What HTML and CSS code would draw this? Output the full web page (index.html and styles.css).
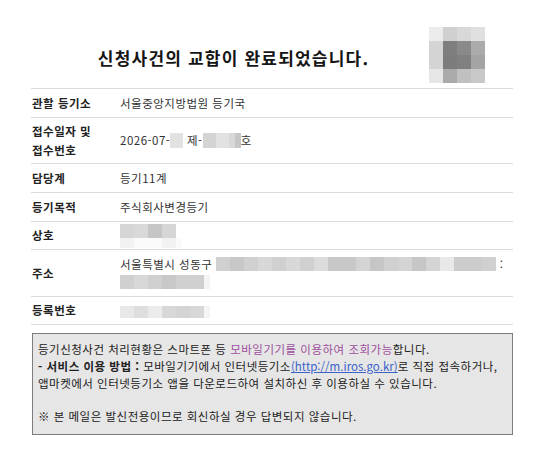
FILE: index.html
```html
<!DOCTYPE html>
<html lang="ko">
<head>
<meta charset="utf-8">
<title>교합 완료 안내</title>
<link rel="stylesheet" href="styles.css">
</head>
<body>
<div class="mail">
  <header class="head">
    <h1 class="title">신청사건의 교합이 완료되었습니다.</h1>
    <div class="qr" aria-hidden="true">
      <span></span><span></span><span></span><span></span>
      <span></span><span></span><span></span><span></span>
      <span></span><span></span><span></span><span></span>
      <span></span><span></span><span></span><span></span>
    </div>
  </header>

  <div class="info">
    <div class="row">
      <div class="label">관할 등기소</div>
      <div class="value">서울중앙지방법원 등기국</div>
    </div>
    <div class="row row-receipt">
      <div class="label label-2">접수일자 및<br>접수번호</div>
      <div class="value">2026-07-<span class="mask mask-day"><i class="c-e2"></i></span> 제-<span class="mask mask-no"><i class="c-d4"></i><i class="c-e2"></i><i class="c-d8 w6"></i><i class="c-c6 w6"></i></span>호</div>
    </div>
    <div class="row">
      <div class="label">담당계</div>
      <div class="value">등기11계</div>
    </div>
    <div class="row">
      <div class="label">등기목적</div>
      <div class="value">주식회사변경등기</div>
    </div>
    <div class="row row-s">
      <div class="label">상호</div>
      <div class="value">
        <span class="mask-line mask-tall"><i class="c-d6"></i><i class="c-d9"></i><i class="c-c6"></i><i class="c-d6"></i></span>
        <span class="mask-line mask-low"><i class="c-f2"></i><i class="c-fa"></i><i class="c-fa"></i><i class="c-f2"></i><i class="c-fa w6"></i></span>
      </div>
    </div>
    <div class="row row-addr">
      <div class="label">주소</div>
      <div class="value">
        <span class="addr-line">서울특별시 성동구 <span class="mask mask-addr"><i class="c-d0"></i><i class="c-c8"></i><i class="c-d0"></i><i class="c-d8"></i><i class="c-d0"></i><i class="c-d8"></i><i class="c-d0"></i><i class="c-dc"></i><i class="c-c8"></i><i class="c-c8"></i><i class="c-d4"></i><i class="c-c6"></i><i class="c-d0"></i><i class="c-d4"></i><i class="c-c6"></i><i class="c-d4"></i><i class="c-e8"></i><i class="c-cc"></i><i class="c-cc"></i><i class="c-d0"></i></span> :</span>
        <span class="addr-line"><span class="mask mask-addr2"><i class="c-d0"></i><i class="c-d8"></i><i class="c-d0"></i><i class="c-c8"></i><i class="c-d0"></i><i class="c-d0"></i><i class="c-f4 w6"></i></span></span>
      </div>
    </div>
    <div class="row row-s">
      <div class="label">등록번호</div>
      <div class="value"><span class="mask mask-reg"><i class="c-e8"></i><i class="c-de"></i><i class="c-ec"></i><i class="c-d8"></i><i class="c-d4"></i><i class="c-d8"></i><i class="c-f4 w6"></i></span></div>
    </div>
  </div>

  <div class="notice">
    <p class="notice-p">등기신청사건 처리현황은 스마트폰 등 <span class="hl">모바일기기를 이용하여 조회가능</span>합니다.<br><strong>- 서비스 이용 방법 :</strong> 모바일기기에서 인터넷등기소<a class="link" href="#">(http://m.iros.go.kr)</a>로 직접 접속하거나,<br>앱마켓에서 인터넷등기소 앱을 다운로드하여 설치하신 후 이용하실 수 있습니다.</p>
    <p class="notice-p notice-last">※ 본 메일은 발신전용이므로 회신하실 경우 답변되지 않습니다.</p>
  </div>
</div>
</body>
</html>
```

FILE: styles.css
```css
* { box-sizing: content-box; }

body {
  margin: 0;
  background: #fff;
  color: #333;
  font-family: "Noto Sans CJK KR", "Noto Sans", sans-serif;
}

.mail {
  width: 482px;
  margin-left: 31px;
}

/* header */
.head {
  display: flex;
  align-items: flex-start;
  height: 61px;
  padding-top: 27px;
  border-bottom: 1px solid #dcdcdc;
}

.title {
  width: 391px;
  padding-left: 7px;
  margin: 0;
  font-size: 17px;
  letter-spacing: 1.2px;
  line-height: 61px;
  font-weight: 700;
  color: #151515;
  text-align: center;
  white-space: nowrap;
}

.qr {
  display: grid;
  grid-template-columns: repeat(4, 14px);
  grid-auto-rows: 14px;
}
.qr span:nth-child(1) { background: #ececec; }
.qr span:nth-child(2) { background: #d0d0d0; }
.qr span:nth-child(3) { background: #d8d8d8; }
.qr span:nth-child(4) { background: #e0e0e0; }
.qr span:nth-child(5) { background: #d4d4d4; }
.qr span:nth-child(6) { background: #7e7e7e; }
.qr span:nth-child(7) { background: #8a8a8a; }
.qr span:nth-child(8) { background: #ababab; }
.qr span:nth-child(9) { background: #d4d4d4; }
.qr span:nth-child(10) { background: #7c7c7c; }
.qr span:nth-child(11) { background: #808080; }
.qr span:nth-child(12) { background: #a4a4a4; }
.qr span:nth-child(13) { background: #e6e6e6; }
.qr span:nth-child(14) { background: #aaaaaa; }
.qr span:nth-child(15) { background: #c0c0c0; }
.qr span:nth-child(16) { background: #c8c8c8; }

/* info rows */
.row {
  display: grid;
  grid-template-columns: 88px 1fr;
  align-items: center;
  min-height: 28px;
  border-bottom: 1px solid #dcdcdc;
  font-size: 11.5px;
  letter-spacing: 0.5px;
  line-height: 17px;
}
.row-receipt { min-height: 45px; }
.row-s { min-height: 27px; }
.row-addr { min-height: 46px; }

.label {
  padding-left: 1px;
  font-weight: 700;
  color: #222;
}
.label-2 { line-height: 19px; }

.value {
  padding-left: 1px;
  color: #333;
  white-space: nowrap;
}

/* masked (blurred) values */
.mask {
  display: inline-flex;
  vertical-align: middle;
}
.mask i {
  display: block;
  width: 14px;
  height: 100%;
}
.mask i.w6 { width: 6px; }

.mask-day { height: 15px; width: 13px; margin-top: -3px; }
.mask-day i { width: 13px; }
.mask-no { height: 15px; margin-top: -3px; }
.mask-no i { width: 13px; }
.mask-no i.w6 { width: 6px; }

.mask-line {
  display: flex;
}
.mask-line i {
  display: block;
  width: 14px;
}
.mask-line i.w6 { width: 6px; }
.mask-tall { height: 14px; }
.mask-tall i { height: 14px; }
.mask-low { height: 10px; }
.mask-low i { height: 10px; }

.addr-line { display: block; }
.mask-addr { height: 14px; margin-top: -4px; }
.mask-addr2 { height: 14px; margin-top: -1px; }
.mask-reg { height: 12px; margin-top: 0; }

.c-c6 { background: #c6c6c6; }
.c-c8 { background: #c8c8c8; }
.c-cc { background: #cccccc; }
.c-d0 { background: #d0d0d0; }
.c-d4 { background: #d4d4d4; }
.c-d6 { background: #d6d6d6; }
.c-d8 { background: #d8d8d8; }
.c-d9 { background: #d9d9d9; }
.c-dc { background: #dcdcdc; }
.c-de { background: #dedede; }
.c-e2 { background: #e2e2e2; }
.c-e8 { background: #e8e8e8; }
.c-ec { background: #ececec; }
.c-f2 { background: #f2f2f2; }
.c-f4 { background: #f4f4f4; }
.c-fa { background: #fafafa; }

/* notice box */
.notice {
  margin-top: 8px;
  margin-left: 1px;
  width: 469px;
  padding: 7px 5px 9px 5px;
  border: 1px solid #7d7d7d;
  background: #e6e6e6;
  font-size: 11.5px;
  letter-spacing: 0.5px;
  line-height: 17px;
  color: #222;
}

.notice-p {
  margin: 0;
  white-space: nowrap;
}
.notice-last { margin-top: 16px; }

.notice strong { font-weight: 700; }

.hl { color: #9e4f9e; }

.link {
  color: #3a62c9;
  letter-spacing: 0;
  text-decoration: underline;
}
```
